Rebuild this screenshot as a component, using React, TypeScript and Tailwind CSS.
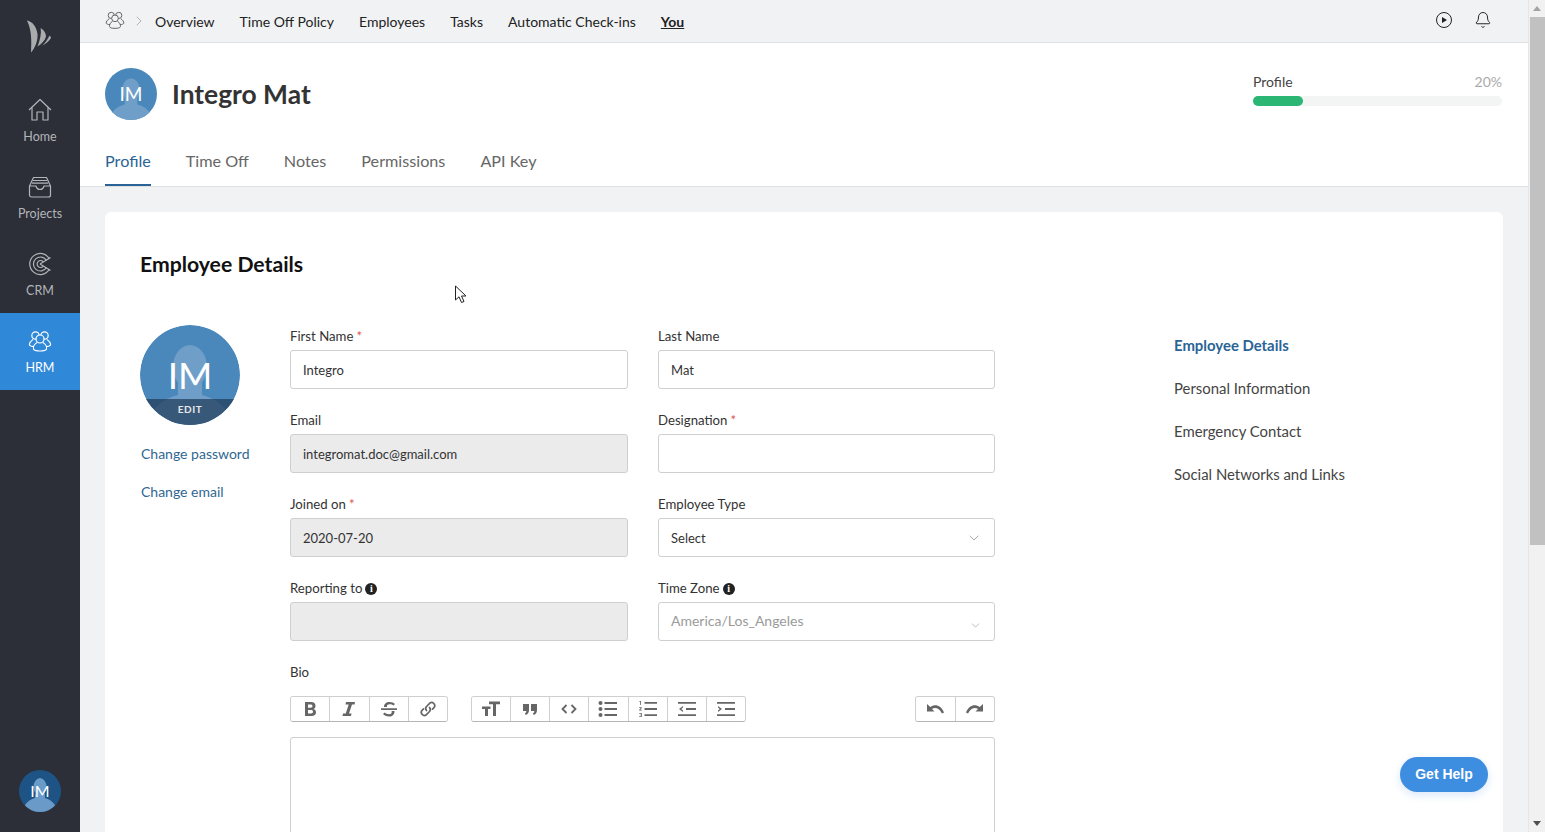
import type { ReactNode } from 'react';
import { Bell, ChevronDown, ChevronRight } from 'lucide-react';

function LogoMark() {
  return (
    <svg width="26" height="34" viewBox="0 0 26 34" className="text-[#a9abad]" fill="currentColor">
      <path d="M1 0.500 C6 1.500 10.500 6 11.500 14 C12 21 9 28 5 32.500 C5.500 22 6 11 1 0.500 Z" />
      <path d="M14.700 8 C18 10 20 13 20 16.500 C19 20.500 15.500 24 11.500 26.500 C14 20 15.500 14 14.700 8 Z" />
      <path d="M23.500 15.500 C24.500 16.500 25 17.500 25 18 C23 21 20 24 16.500 25.500 C19.500 22.500 22 19 23.500 15.500 Z" />
    </svg>
  );
}

function HomeIcon() {
  return (
    <svg width="24" height="24" viewBox="0 0 24 24" fill="none" stroke="currentColor" strokeWidth="1.200" strokeLinejoin="round">
      <path d="M1 12 L12 1.500 L23 12" />
      <path d="M4 9.500 V22 H9 V14 H15 V22 H20 V9.500" />
    </svg>
  );
}

function PeopleIcon({ size = 24, className = '' }: { size?: number; className?: string }) {
  return (
    <svg width={size} height={size} viewBox="0 0 24 24" fill="none" stroke="currentColor" strokeWidth="1.200" className={className}>
      <circle cx="7.500" cy="6.500" r="3.700" />
      <circle cx="16.500" cy="6.500" r="3.700" />
      <circle cx="12" cy="10" r="4" fill="var(--fill)" />
      <path d="M5 10.500 C3 12 1 14 1.500 16 C2 17 4 17.500 6 17.500" />
      <path d="M19 10.500 C21 12 23 14 22.500 16 C22 17 20 17.500 18 17.500" />
      <path d="M9 13.500 C6.500 15 5 18 5.500 20 C6 21.500 8 22 12 22 C16 22 18 21.500 18.500 20 C19 18 17.500 15 15 13.500" />
    </svg>
  );
}

function TrayIcon() {
  return (
    <svg width="24" height="24" viewBox="0 0 24 24" fill="none" stroke="currentColor" strokeWidth="1.200" strokeLinejoin="round">
      <path d="M5.500 2.500 H18.500 L22.500 11 V20 C22.500 21 21.500 22 20.500 22 H3.500 C2.500 22 1.500 21 1.500 20 V11 Z" />
      <path d="M1.500 11 H8 C8.500 13 9.500 14.500 12 14.500 C14.500 14.500 15.500 13 16 11 H22.500" />
      <path d="M5 5.500 H19 M4 8.200 H20" />
    </svg>
  );
}

function TargetIcon() {
  return (
    <svg width="24" height="24" viewBox="0 0 24 24" fill="none" stroke="currentColor" strokeWidth="1.200">
      <path d="M21.500 7 A10.500 10.500 0 1 0 21.500 17" />
      <path d="M18.500 8.500 A7 7 0 1 0 18.500 15.500" />
      <path d="M15.500 10 A3.500 3.500 0 1 0 15.500 14" />
      <path d="M12 12 L22.500 5.500 M12 12 L22.500 18.500" />
    </svg>
  );
}

function Avatar({ size, textClass }: { size: number; textClass: string }) {
  return (
    <div
      className="relative overflow-hidden rounded-full bg-[#4a88bb]"
      style={{ width: size, height: size }}
    >
      <svg viewBox="0 0 100 100" className="absolute inset-0 h-full w-full" fill="#6f9fc8">
        <ellipse cx="50" cy="42" rx="17" ry="22" />
        <path d="M38 58 L38 70 C25 74 12 80 8 100 L92 100 C88 80 75 74 62 70 L62 58 Z" />
      </svg>
      <span className={`absolute inset-0 flex items-center justify-center text-white ${textClass}`}>IM</span>
    </div>
  );
}

function NavItem({ label, icon, active }: { label: string; icon: ReactNode; active?: boolean }) {
  return (
    <div
      className={`flex h-[77px] flex-col items-center justify-center gap-[7px] pt-[2px] text-[12.500px] ${
        active ? 'bg-[#2f88d8] text-white' : 'text-[#b3b5b9]'
      }`}
    >
      {icon}
      <span className="leading-4">{label}</span>
    </div>
  );
}

function Label({ text, required, info }: { text: string; required?: boolean; info?: boolean }) {
  return (
    <div className="flex h-[17px] items-center text-[13.200px] leading-[17px] text-[#333]">
      <span>{text}</span>
      {required && <span className="ml-[3px] text-[#d9534f]">*</span>}
      {info && (
        <span className="ml-[3px] flex h-3 w-3 items-center justify-center rounded-full bg-[#222] font-['Liberation_Serif'] text-[10px] font-bold text-white">
          i
        </span>
      )}
    </div>
  );
}

function Field({
  label,
  value,
  required,
  info,
  disabled,
  select,
  muted,
}: {
  label: string;
  value?: string;
  required?: boolean;
  info?: boolean;
  disabled?: boolean;
  select?: boolean;
  muted?: boolean;
}) {
  return (
    <div className="h-[84px] pt-[3px]">
      <Label text={label} required={required} info={info} />
      <div
        className={`relative mt-[5px] flex h-[39px] items-center justify-between rounded-[3px] border border-[#cfcfcf] pl-3 pr-[12px] ${
          disabled ? 'bg-[#ebebec]' : 'bg-white'
        } ${muted ? 'text-[14px] text-[#9a9a9a]' : 'text-[13px] text-[#333]'}`}
      >
        <span className={muted ? '-mt-[2px]' : 'mt-[2px]'}>{value}</span>
        {select && (
          <ChevronDown
            size={muted ? 13 : 16}
            strokeWidth={1.200}
            className={`text-[#999] ${muted ? 'mt-2' : ''}`}
          />
        )}
      </div>
    </div>
  );
}

const toolIcon = {
  width: 20,
  height: 20,
  viewBox: '0 0 20 20',
  fill: '#666',
};

const TOOLS_TEXT: ReactNode[] = [
  <svg {...toolIcon}><path d="M5 3 H11 C14 3 15.500 4.500 15.500 7 C15.500 8.500 14.800 9.500 13.500 10 C15.200 10.500 16 11.800 16 13.300 C16 15.800 14.300 17 11.500 17 H5 Z M8 5.500 V8.800 H10.500 C11.800 8.800 12.500 8.200 12.500 7.100 C12.500 6 11.800 5.500 10.500 5.500 Z M8 11 V14.500 H11 C12.300 14.500 13 13.900 13 12.800 C13 11.600 12.300 11 11 11 Z" /></svg>,
  <svg {...toolIcon}><path d="M7 3 H16 L15.500 5.500 H13 L10 14.500 H12.500 L12 17 H3.500 L4 14.500 H6.700 L9.700 5.500 H6.500 Z" /></svg>,
  <svg {...toolIcon}><path d="M2 9.200 H18 V11 H2 Z" /><path d="M5 8 C5 5 7 3 10.500 3 C13 3 14.800 3.800 16 5 L14.500 6.500 C13.500 5.600 12.200 5.200 10.700 5.200 C8.800 5.200 8 6 8 7 L8 8 Z M15.500 12 C15.700 15.500 13.500 17.500 10 17.500 C7.500 17.500 5.300 16.500 4 15 L5.700 13.500 C6.800 14.700 8.300 15.200 10 15.200 C11.800 15.200 12.700 14.300 12.700 13.200 L12.600 12 Z" /></svg>,
  <svg width="20" height="20" viewBox="0 0 20 20" fill="none" stroke="#666" strokeWidth="1.700" strokeLinecap="round">
    <path d="M8.500 11.500 A3 3 0 0 1 8.500 7.500 L12 3.900 A3.200 3.200 0 0 1 16.300 8.300 L14.500 10.100" />
    <path d="M11.500 8.500 A3 3 0 0 1 11.500 12.500 L8 16.100 A3.200 3.200 0 0 1 3.700 11.700 L5.500 9.900" />
  </svg>,
];

const TOOLS_BLOCK: ReactNode[] = [
  <svg {...toolIcon}><path d="M8 2.500 H19 V5.200 H15 V17 H12 V5.200 H8 Z" /><path d="M1 7.500 H9.500 V10 H7 V17 H4 V10 H1 Z" /></svg>,
  <svg {...toolIcon}><path d="M3 5 H9 V11 C9 13.500 7.800 15.200 5.800 16 L4.800 14.500 C5.800 14 6.300 13.200 6.300 12 H3 Z M11 5 H17 V11 C17 13.500 15.800 15.200 13.800 16 L12.800 14.500 C13.800 14 14.300 13.200 14.300 12 H11 Z" /></svg>,
  <svg width="20" height="20" viewBox="0 0 20 20" fill="none" stroke="#666" strokeWidth="1.800"><path d="M7.500 6 L3.500 10 L7.500 14 M12.500 6 L16.500 10 L12.500 14" /></svg>,
  <svg {...toolIcon}><circle cx="2.500" cy="4" r="2" /><circle cx="2.500" cy="10" r="2" /><circle cx="2.500" cy="16" r="2" /><path d="M6.500 3 H19 V5 H6.500 Z M6.500 9 H19 V11 H6.500 Z M6.500 15 H19 V17 H6.500 Z" /></svg>,
  <svg {...toolIcon}><path d="M6.500 3 H19 V4.800 H6.500 Z M6.500 9.100 H19 V10.900 H6.500 Z M6.500 15.200 H19 V17 H6.500 Z M1.500 2 H3 V6 H2.200 V3 H1.500 Z M1.200 8.200 H3.800 V9 L2.300 10.800 H3.800 V11.500 H1.200 V10.800 L2.800 9 H1.200 Z M1.200 14 H3.800 V18 H1.200 V17.300 H3 V16.300 H1.800 V15.700 H3 V14.700 H1.200 Z" /></svg>,
  <svg {...toolIcon}><path d="M1 3 H19 V4.800 H1 Z M9 9.100 H19 V10.900 H9 Z M1 15.200 H19 V17 H1 Z M6 7 L2 10 L6 13 V11.500 L4.300 10 L6 8.500 Z" /></svg>,
  <svg {...toolIcon}><path d="M1 3 H19 V4.800 H1 Z M9 9.100 H19 V10.900 H9 Z M1 15.200 H19 V17 H1 Z M2 7 L6 10 L2 13 V11.500 L3.700 10 L2 8.500 Z" /></svg>,
];

const TOOLS_HISTORY: ReactNode[] = [
  <svg {...toolIcon}><path d="M2 5 L2 12.500 L9.500 12.500 L7 10 C10 8.200 14 8.800 17 14.500 L19 13.500 C16 6 10 4.500 5.300 8 Z" /></svg>,
  <svg {...toolIcon}><path d="M18 5 L18 12.500 L10.500 12.500 L13 10 C10 8.200 6 8.800 3 14.500 L1 13.500 C4 6 10 4.500 14.700 8 Z" /></svg>,
];

function ToolGroup({ items, widthClass }: { items: ReactNode[]; widthClass: string }) {
  return (
    <div className={`flex h-[26px] overflow-hidden rounded-[3px] border border-[#cfcfcf] border-b-[#b5b5b5] ${widthClass}`}>
      {items.map((item, i) => (
        <div
          key={i}
          className={`flex flex-1 items-center justify-center bg-white ${i > 0 ? 'border-l border-[#cfcfcf]' : ''}`}
        >
          {item}
        </div>
      ))}
    </div>
  );
}

const TOP_LINKS = ['Overview', 'Time Off Policy', 'Employees', 'Tasks', 'Automatic Check-ins'];
const TABS = ['Time Off', 'Notes', 'Permissions', 'API Key'];
const SECTIONS = ['Personal Information', 'Emergency Contact', 'Social Networks and Links'];

export default function App() {
  return (
    <div className="flex h-[832px] overflow-hidden bg-[#f1f2f4] font-['Lato',sans-serif] text-[#333]">
      <aside className="flex w-20 shrink-0 flex-col bg-[#2c2f38]">
        <div className="flex h-[84px] items-start justify-center pr-[2px] pt-[20px]">
          <LogoMark />
        </div>
        <div className="mt-[-2px]">
          <NavItem label="Home" icon={<HomeIcon />} />
          <NavItem label="Projects" icon={<TrayIcon />} />
          <NavItem label="CRM" icon={<TargetIcon />} />
          <NavItem label="HRM" active icon={<PeopleIcon className="[--fill:#2f88d8]" />} />
        </div>
        <div className="mt-auto flex justify-center pb-5">
          <div className="relative h-[42px] w-[42px] overflow-hidden rounded-full bg-[#1d5485]">
            <svg viewBox="0 0 42 42" className="absolute inset-0" fill="#6a9bc8">
              <ellipse cx="21" cy="17" rx="6.500" ry="9" />
              <path d="M16 24 V28 C10 30 5 33 4 42 H38 C37 33 32 30 26 28 V24 Z" />
            </svg>
            <span className="absolute inset-0 flex items-center justify-center text-[16px] text-white">IM</span>
          </div>
        </div>
      </aside>

      <div className="flex min-w-0 flex-1 flex-col">
        <header className="flex h-[43px] shrink-0 items-center border-b border-[#dfe0e2] bg-[#f1f2f4] pl-[25px] pr-[36px] text-[14px] text-[#222]">
          <PeopleIcon size={20} className="-mt-[3px] text-[#666] [--fill:#f1f2f4]" />
          <ChevronRight size={16} strokeWidth={1.100} className="ml-[6px] text-[#999]" />
          <nav className="ml-[8px] flex gap-[25px]">
            {TOP_LINKS.map((link) => (
              <span key={link}>{link}</span>
            ))}
            <span className="font-bold underline">You</span>
          </nav>
          <div className="-mt-[3px] ml-auto flex items-center gap-[22px]">
            <span className="flex h-[16px] w-[16px] items-center justify-center rounded-full border-[1.500px] border-[#222]">
              <span className="ml-[1px] h-0 w-0 border-y-[3.500px] border-l-[5px] border-y-transparent border-l-[#222]" />
            </span>
            <Bell size={18} strokeWidth={1.300} />
          </div>
        </header>

        <section className="h-[144px] shrink-0 border-b border-[#dfe0e2] bg-white px-[25px]">
          <div className="flex h-[104px] items-start justify-between pt-[25px]">
            <div className="flex items-center gap-[15px]">
              <Avatar size={52} textClass="text-[19px]" />
              <h1 className="text-[26.400px] font-bold leading-[52px] text-[#333]">Integro Mat</h1>
            </div>
            <div className="-ml-[1px] mr-[1px] mt-[5px] w-[249px]">
              <div className="flex justify-between text-[14px] leading-[17px]">
                <span className="text-[#444]">Profile</span>
                <span className="text-[#aaa]">20%</span>
              </div>
              <div className="mt-[6px] h-[10px] rounded-full bg-[#f3f4f4]">
                <div className="h-full w-[50px] rounded-full bg-[#2bb673]" />
              </div>
            </div>
          </div>
          <div className="flex h-[39px] gap-[35px] text-[16.200px] text-[#666]">
            <span className="h-[39px] border-b-2 border-[#2a6496] leading-[28px] text-[#2a6496]">Profile</span>
            {TABS.map((tab) => (
              <span key={tab} className="leading-[28px]">{tab}</span>
            ))}
          </div>
        </section>

        <main className="min-h-0 flex-1 px-[25px] pt-[25px]">
          <div className="h-[700px] rounded-t-[6px] bg-white pl-[35px] pr-[35px] pt-[35px]">
            <h2 className="text-[21.200px] font-bold leading-[35px] text-[#111]">Employee Details</h2>
            <div className="mt-[43px] flex">
              <div className="w-[150px] shrink-0">
                <div className="relative h-[100px] w-[100px] overflow-hidden rounded-full">
                  <Avatar size={100} textClass="text-[37px]" />
                  <div className="absolute inset-x-0 bottom-0 h-[26px] bg-[#1f3a57]/70 pt-[3px] text-center text-[10px] font-bold leading-[14px] tracking-[0.5px] text-[#e8e8e8]">
                    EDIT
                  </div>
                </div>
                <div className="ml-px mt-[20px] text-[14px] leading-[17px] text-[#2f6790]">Change password</div>
                <div className="ml-px mt-[21px] text-[14px] leading-[17px] text-[#2f6790]">Change email</div>
              </div>

              <div className="w-[705px] shrink-0">
                <div className="grid grid-cols-[338px_337px] gap-x-[30px]">
                  <Field label="First Name" required value="Integro" />
                  <Field label="Last Name" value="Mat" />
                  <Field label="Email" value="integromat.doc@gmail.com" disabled />
                  <Field label="Designation" required />
                  <Field label="Joined on" required value="2020-07-20" disabled />
                  <Field label="Employee Type" select value="Select" />
                  <Field label="Reporting to" info disabled />
                  <Field label="Time Zone" info select muted value="America/Los_Angeles" />
                </div>
                <div className="pt-[3px]"><Label text="Bio" /></div>
                <div className="mt-[15px] flex">
                  <ToolGroup items={TOOLS_TEXT} widthClass="w-[158px]" />
                  <ToolGroup items={TOOLS_BLOCK} widthClass="ml-[23px] w-[275px]" />
                  <ToolGroup items={TOOLS_HISTORY} widthClass="ml-auto w-[80px]" />
                </div>
                <div className="mt-[15px] h-[200px] rounded-[3px] border border-[#cfcfcf] bg-white" />
              </div>

              <aside className="ml-[179px] pt-[11px] text-[14.900px] leading-[18px] text-[#444]">
                <div className="font-bold text-[#2a6496]">Employee Details</div>
                {SECTIONS.map((section) => (
                  <div key={section} className="mt-[25px]">{section}</div>
                ))}
              </aside>
            </div>
          </div>
        </main>
      </div>

      <div className="relative flex w-[17px] shrink-0 flex-col items-center border-l border-[#e6e6e6] bg-[#f1f1f1]">
        <span className="mt-[6px] h-0 w-0 border-x-[4px] border-b-[5px] border-x-transparent border-b-[#a3a3a3]" />
        <div className="mt-[6px] h-[528px] w-[15px] bg-[#c1c1c1]" />
        <span className="mb-[6px] mt-auto h-0 w-0 border-x-[4px] border-t-[5px] border-x-transparent border-t-[#505050]" />
      </div>

      <div className="absolute left-[1400px] top-[757px] flex h-[35px] w-[88px] items-center justify-center rounded-full bg-[#3d8de0] font-['Liberation_Sans',sans-serif] text-[14px] font-bold text-white shadow-[0_3px_8px_rgba(61,141,224,0.2)]">
        Get Help
      </div>

      <svg width="14" height="20" viewBox="0 0 14 20" className="absolute left-[454px] top-[285px]" fill="#fff" stroke="#222" strokeWidth="1">
        <path d="M1.500 1 V15 L5 11.800 L7.500 17.500 L10 16.500 L7.500 11 H12 Z" />
      </svg>
    </div>
  );
}
